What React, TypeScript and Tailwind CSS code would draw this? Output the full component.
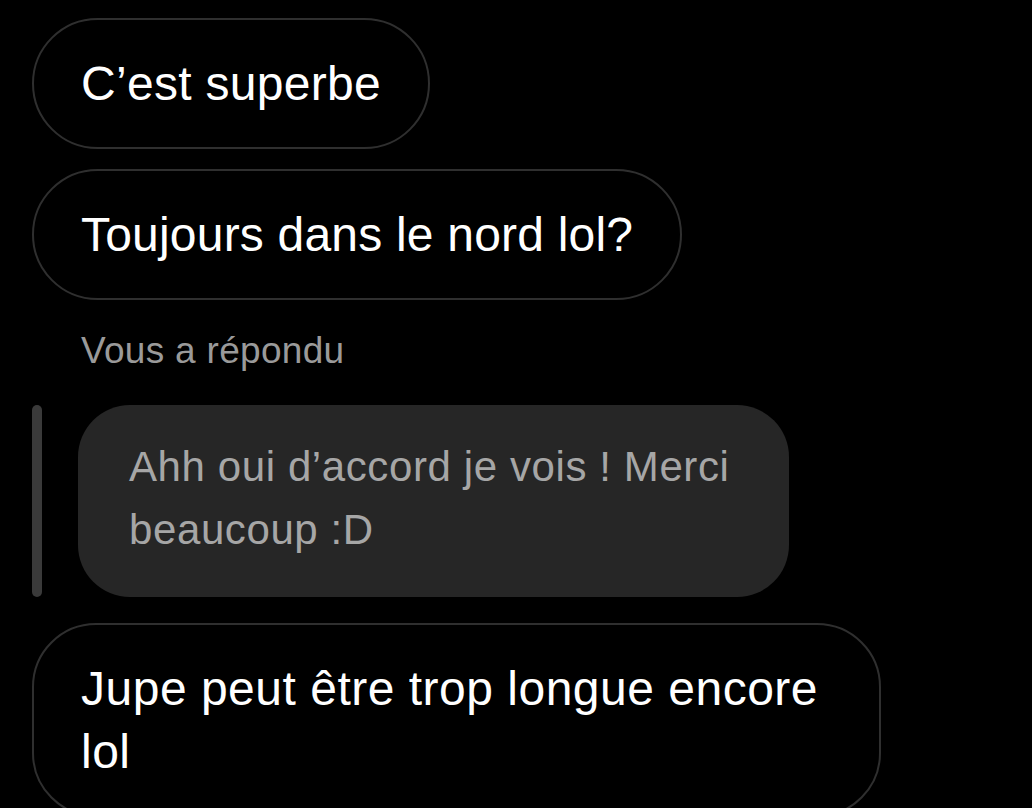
export default function App() {
  const font = { fontFamily: '"Liberation Sans", Arial, sans-serif' };

  return (
    <div className="w-[1032px] h-[808px] bg-black overflow-hidden" style={font}>
      <div className="flex flex-col items-start pl-[32px] pt-[18px]">
        <div className="border-2 border-[#2f2f2f] rounded-[66px] px-[47px] py-[32px] text-[48px] leading-[63px] tracking-[0.3px] text-white">
          C’est superbe
        </div>

        <div className="mt-[20px] border-2 border-[#2f2f2f] rounded-[66px] px-[47px] py-[32px] text-[48px] leading-[63px] tracking-[0.2px] text-white">
          Toujours dans le nord lol?
        </div>

        <p className="mt-[29px] ml-[49px] text-[37px] leading-[44px] tracking-[0.3px] text-[#9a9a9a]">
          Vous a répondu
        </p>

        <div className="mt-[32px] flex flex-row items-stretch gap-[36px]">
          <div className="w-[10px] rounded-full bg-[#3a3a3a]" />
          <div className="max-w-[711px] bg-[#262626] rounded-[52px] pl-[51px] pr-[40px] pt-[30px] pb-[36px] text-[42px] leading-[63px] tracking-[0.6px] text-[#a6a6a6]">
            Ahh oui d’accord je vois ! Merci beaucoup :D
          </div>
        </div>

        <div className="mt-[26px] max-w-[849px] border-2 border-[#2f2f2f] rounded-[64px] px-[47px] py-[32px] text-[48px] leading-[63px] tracking-[0.5px] text-white">
          Jupe peut être trop longue encore lol
        </div>
      </div>
    </div>
  );
}
